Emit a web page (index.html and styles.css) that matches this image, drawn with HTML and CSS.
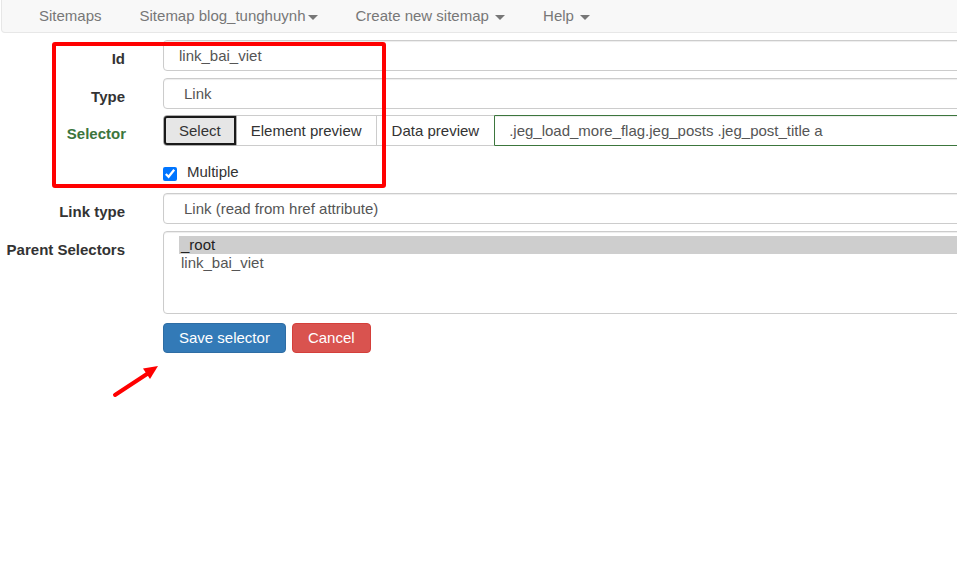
FILE: index.html
```html
<!DOCTYPE html>
<html lang="en">
<head>
    <meta charset="UTF-8">
    <meta name="viewport" content="width=device-width, initial-scale=1.0">
    <title>Edit selector</title>
    <link rel="stylesheet" href="styles.css">
</head>
<body>
    <nav class="navbar">
        <ul class="nav">
            <li><a href="#">Sitemaps</a></li>
            <li><a href="#">Sitemap blog_tunghuynh<span class="caret"></span></a></li>
            <li><a href="#">Create new sitemap <span class="caret"></span></a></li>
            <li><a href="#">Help <span class="caret"></span></a></li>
        </ul>
    </nav>

    <form class="form">
        <div class="form-group">
            <label class="control-label">Id</label>
            <div class="col">
                <div class="form-control">link_bai_viet</div>
            </div>
        </div>

        <div class="form-group type-row">
            <label class="control-label">Type</label>
            <div class="col">
                <div class="form-control select-like">Link</div>
            </div>
        </div>

        <div class="form-group selector-row">
            <label class="control-label label-success">Selector</label>
            <div class="col">
                <div class="input-group">
                    <button type="button" class="btn-select">Select</button>
                    <span class="addon">Element preview</span>
                    <span class="addon addon-last">Data preview</span>
                    <div class="form-control input-success">.jeg_load_more_flag.jeg_posts .jeg_post_title a</div>
                </div>
            </div>
        </div>

        <div class="form-group check-row">
            <span class="control-label"></span>
            <div class="col">
                <label class="checkbox">
                    <input type="checkbox" checked>
                    <span>Multiple</span>
                </label>
            </div>
        </div>

        <div class="form-group">
            <label class="control-label">Link type</label>
            <div class="col">
                <div class="form-control select-like">Link (read from href attribute)</div>
            </div>
        </div>

        <div class="form-group parent-row">
            <label class="control-label">Parent Selectors</label>
            <div class="col">
                <div class="multi-select">
                    <div class="option selected">_root</div>
                    <div class="option">link_bai_viet</div>
                </div>
            </div>
        </div>

        <div class="form-group">
            <span class="control-label"></span>
            <div class="col actions">
                <button type="button" class="btn btn-primary">Save selector</button>
                <button type="button" class="btn btn-danger">Cancel</button>
            </div>
        </div>
    </form>

    <!-- annotations drawn over the screenshot -->
    <div class="annot-box"></div>
    <svg class="annot-arrow" width="70" height="50" viewBox="0 0 70 50">
        <line x1="15" y1="40" x2="47" y2="19" stroke="#ff0000" stroke-width="4" stroke-linecap="round"/>
        <polygon points="58,11 50,24 43,13.5" fill="#ff0000"/>
    </svg>
</body>
</html>
```

FILE: styles.css
```css
html, body {
    margin: 0;
    padding: 0;
}

body {
    font-family: 'Liberation Sans', Arial, Helvetica, sans-serif;
    font-size: 15px;
    color: #333;
    background: #fff;
    overflow: hidden;
    width: 957px;
    height: 578px;
    position: relative;
}

.navbar {
    width: 1100px;
    margin-left: 1px;
    background-color: #f8f8f8;
    border: 1px solid #e7e7e7;
    border-top: none;
    border-bottom-left-radius: 4px;
    height: 32px;
}

.nav {
    list-style: none;
    margin: 0;
    padding: 0 0 0 18px;
    display: flex;
}

.nav a {
    display: block;
    padding: 7px 19px 8px;
    line-height: 17px;
    color: #777;
    text-decoration: none;
}

.caret {
    display: inline-block;
    width: 0;
    height: 0;
    margin-left: 2px;
    vertical-align: middle;
    border-top: 5px solid #777;
    border-left: 5px solid transparent;
    border-right: 5px solid transparent;
}

.form {
    width: 1150px;
    padding-top: 7px;
}

.form-group {
    display: flex;
    margin-bottom: 7px;
}

.type-row {
    margin-bottom: 6px;
}

.selector-row,
.check-row {
    margin-bottom: 0;
}

.parent-row {
    margin-bottom: 9px;
}

.control-label {
    width: 140px;
    flex: none;
    box-sizing: border-box;
    padding: 10px 15px 0 0;
    line-height: 17px;
    text-align: right;
    font-weight: bold;
    color: #333;
}

.label-success {
    color: #3c763d;
    padding-right: 14px;
}

.col {
    flex: 1;
    margin-left: 23px;
}

.form-control {
    box-sizing: border-box;
    height: 31px;
    line-height: 29px;
    padding: 0 15px;
    border: 1px solid #ccc;
    border-radius: 4px;
    color: #555;
    background: #fff;
    box-shadow: inset 0 1px 1px rgba(0, 0, 0, .075);
    white-space: nowrap;
}

.select-like {
    padding-left: 20px;
}

.input-group {
    display: flex;
    height: 31px;
}

.btn-select {
    box-sizing: border-box;
    height: 31px;
    margin: 0;
    padding: 0 15px;
    font: inherit;
    color: #333;
    background: #e6e6e6;
    border: 1px solid #adadad;
    border-radius: 4px 0 0 4px;
    outline: 2px solid #1a1a1a;
    outline-offset: -3px;
}

.addon {
    box-sizing: border-box;
    height: 31px;
    line-height: 29px;
    padding: 0 14px;
    border: 1px solid #ccc;
    border-left: none;
    background: #fff;
    color: #333;
    white-space: nowrap;
}

.addon-last {
    padding: 0 15px;
    border-right: none;
}

.input-success {
    flex: 1;
    border-radius: 0 4px 4px 0;
    border-color: #3c763d;
    border-left-width: 1px;
    padding-left: 14px;
}

.checkbox {
    box-sizing: border-box;
    height: 47px;
    display: flex;
    align-items: flex-start;
    padding-top: 17px;
    line-height: 17px;
    color: #333;
}

.checkbox input {
    width: 14px;
    height: 14px;
    margin: 4px 10px 0 0;
}

.multi-select {
    box-sizing: border-box;
    height: 83px;
    padding: 4px 0 0 15px;
    border: 1px solid #ccc;
    border-radius: 4px;
    box-shadow: inset 0 1px 1px rgba(0, 0, 0, .075);
}

.option {
    height: 18px;
    line-height: 18px;
    padding-left: 2px;
    color: #555;
}

.option.selected {
    background: #cecece;
    color: #222;
}

.actions {
    display: flex;
    gap: 6px;
}

.btn {
    box-sizing: border-box;
    height: 30px;
    margin: 0;
    padding: 0 15px;
    font: inherit;
    line-height: 28px;
    color: #fff;
    border: 1px solid transparent;
    border-radius: 4px;
}

.btn-primary {
    background-color: #337ab7;
    border-color: #2e6da4;
}

.btn-danger {
    background-color: #d9534f;
    border-color: #d43f3a;
}

.annot-box {
    position: absolute;
    left: 52px;
    top: 42px;
    width: 334px;
    height: 146px;
    box-sizing: border-box;
    border: 4px solid #ff0000;
    border-radius: 3px;
}

.annot-arrow {
    position: absolute;
    left: 100px;
    top: 355px;
}
```
